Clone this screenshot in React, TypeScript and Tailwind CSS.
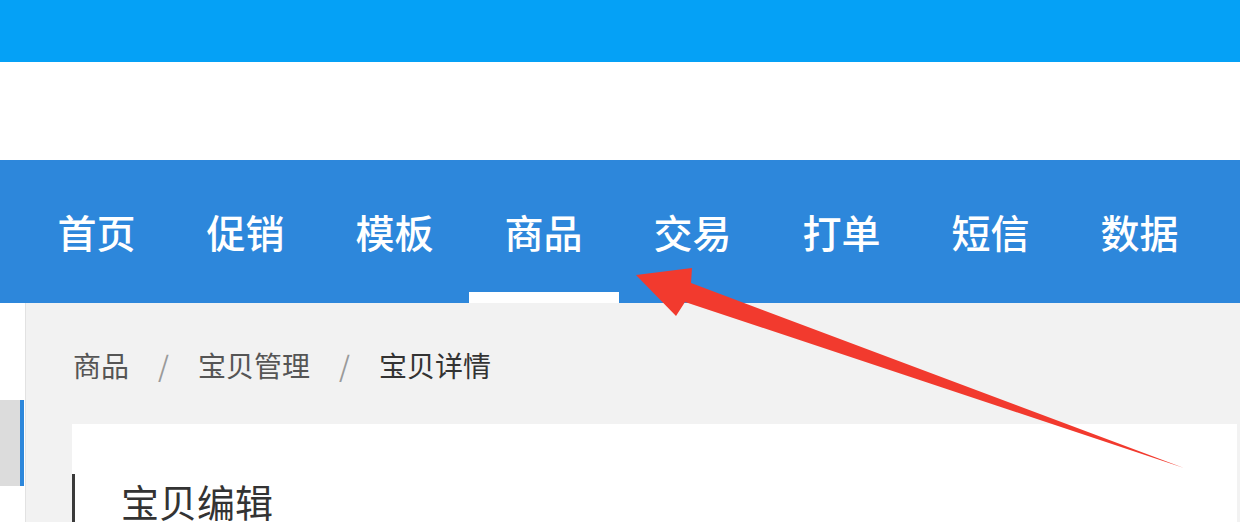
import React from "react";

const navItems = ["首页", "促销", "模板", "商品", "交易", "打单", "短信", "数据"];

const ACTIVE = "商品";

export default function App() {
  return (
    <div
      className="relative h-[522px] w-[1240px] overflow-hidden bg-white"
      style={{ fontFamily: '"Noto Sans CJK SC", "Noto Sans", sans-serif' }}
    >
      {/* top strip */}
      <div className="h-[62px] bg-[#05a1f6]" />
      <div className="h-[98px] bg-white" />

      {/* main nav */}
      <nav className="flex h-[143px] items-stretch bg-[#2d87db] pl-[22px]">
        {navItems.map((item) => (
          <div
            key={item}
            className="relative flex w-[149px] items-center justify-center text-[39px] font-medium leading-none text-white"
          >
            {item}
            {item === ACTIVE && (
              <span className="absolute bottom-0 left-0 h-[11px] w-[150px] bg-white" />
            )}
          </div>
        ))}
      </nav>

      {/* body */}
      <div className="flex h-[219px]">
        <aside className="w-[26px] shrink-0 border-r border-[#e2e2e2] bg-white">
          <div className="mt-[97px] h-[86px] w-[24px] border-r-4 border-[#2d87db] bg-[#dcdcdc]" />
        </aside>

        <main className="flex flex-1 flex-col bg-[#f2f2f2]">
          <div className="flex h-[122px] items-center gap-[29px] pl-[47px] pt-[3px] text-[28px] leading-none">
            <span className="text-[#555]">商品</span>
            <span className="text-[#9a9a9a]">/</span>
            <span className="text-[#555]">宝贝管理</span>
            <span className="text-[#9a9a9a]">/</span>
            <span className="text-[#333]">宝贝详情</span>
          </div>

          <div className="ml-[46px] mr-[3px] flex-1 bg-white pt-[50px]">
            <div className="flex h-[48px] items-center border-l-[3px] border-[#3a3a3a] pl-[46px] pt-[6px] text-[38px] leading-none text-[#333]">
              宝贝编辑
            </div>
          </div>
        </main>
      </div>

      {/* red annotation arrow */}
      <svg
        className="pointer-events-none absolute left-0 top-0"
        width="1240"
        height="522"
        viewBox="0 0 1240 522"
      >
        <polygon
          points="636,275 692,268 691,283 1184,468 685,302 676,316"
          fill="#f23a2e"
        />
      </svg>
    </div>
  );
}
